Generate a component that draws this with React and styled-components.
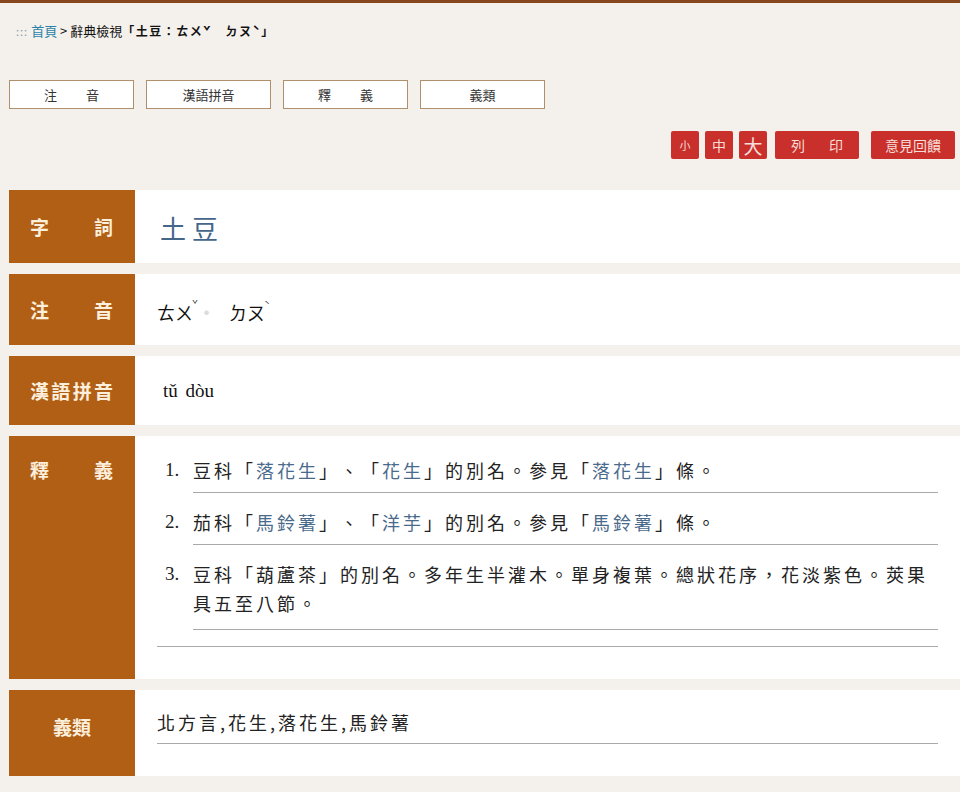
import React from "react";
import styled, { createGlobalStyle } from "styled-components";

const GlobalStyle = createGlobalStyle`
  html, body {
    margin: 0;
    padding: 0;
  }
  body {
    background: #f4f0eb;
    border-top: 3px solid #86461c;
    font-family: "Noto Sans CJK TC", "Noto Sans", sans-serif;
    color: #222;
    overflow: hidden;
    text-spacing-trim: space-all;
  }
`;

const Page = styled.div`
  min-height: 789px;
`;

const Breadcrumb = styled.div`
  padding: 19px 0 0 16px;
  height: 22px;
  font-size: 13px;
  line-height: 18px;
  color: #111;
`;

const Dots = styled.span`
  color: #8a9aa6;
  font-size: 11px;
  letter-spacing: 1px;
  margin-right: 3px;
`;

const Crumb = styled.a`
  color: #2b82a8;
  text-decoration: none;
`;

const Current = styled.span`
  font-weight: 700;
  font-size: 12px;
  letter-spacing: 1.5px;
`;

const Tabs = styled.div`
  display: flex;
  gap: 12px;
  padding: 36px 0 0 9px;
`;

const Tab = styled.button`
  width: 125px;
  height: 29px;
  box-sizing: border-box;
  background: #fff;
  border: 1px solid #b08f6c;
  font-family: "Noto Sans CJK TC", sans-serif;
  font-size: 13px;
  color: #333;
  display: flex;
  align-items: center;
  justify-content: ${(p) => (p.$spread ? "space-between" : "center")};
  padding: ${(p) => (p.$spread ? "0 34px" : "0")};
  cursor: pointer;
`;

const Toolbar = styled.div`
  display: flex;
  justify-content: flex-end;
  align-items: center;
  padding: 22px 5px 0 0;
  height: 28px;
`;

const RedButton = styled.button`
  height: 28px;
  width: ${(p) => p.$w || 28}px;
  margin-left: ${(p) => p.$ml || 6}px;
  box-sizing: border-box;
  background: #c9302b;
  border: none;
  border-radius: 2px;
  color: #f7ddd7;
  font-family: "Noto Sans CJK TC", sans-serif;
  font-size: ${(p) => p.$fs || 14}px;
  line-height: 1;
  padding: ${(p) => (p.$spread ? "0 16px" : "0")};
  display: flex;
  align-items: center;
  justify-content: ${(p) => (p.$spread ? "space-between" : "center")};
  cursor: pointer;
`;

const Rows = styled.div`
  display: flex;
  flex-direction: column;
  gap: 11px;
  padding: 31px 0 0 9px;
`;

const Row = styled.div`
  display: flex;
  min-height: ${(p) => p.$h}px;
`;

const Label = styled.div`
  width: 126px;
  flex: none;
  box-sizing: border-box;
  background: #b25f16;
  color: #fcefdc;
  font-size: 19px;
  font-weight: 700;
  display: flex;
  align-items: ${(p) => (p.$top ? "flex-start" : "center")};
  justify-content: ${(p) => (p.$center ? "center" : "space-between")};
  padding: ${(p) => p.$pad || "0 22px 0 21px"};
  line-height: 24px;
`;

const Cell = styled.div`
  flex: 1;
  background: #fff;
  padding: 0 22px;
  display: flex;
  align-items: center;
  font-size: 18px;
`;

const Block = styled.div`
  flex: 1;
  background: #fff;
  padding: ${(p) => p.$pad};
  font-size: 18px;
`;

const Word = styled.div`
  color: #44668a;
  font-size: 26px;
  letter-spacing: 6px;
  padding-left: 3px;
  padding-top: 2px;
`;

const Zhuyin = styled.div`
  display: flex;
  align-items: center;
  padding-top: 5px;
  font-size: 18px;
  line-height: 24px;
  color: #111;
`;

const Tone = styled.span`
  display: inline-block;
  font-size: 10px;
  line-height: 1;
  vertical-align: 11px;
  margin-left: -1px;
  color: #333;
`;

const Sep = styled.span`
  color: #dcdcdc;
  font-size: 5px;
  margin: 0 20px 0 6px;
`;

const Pinyin = styled.div`
  font-family: "Liberation Serif", serif;
  font-size: 19px;
  padding-left: 6px;
  word-spacing: 3px;
  color: #111;
`;

const Item = styled.div`
  display: flex;
  margin-top: ${(p) => (p.$first ? 0 : 15)}px;
`;

const Num = styled.span`
  width: 36px;
  flex: none;
  padding-left: 8px;
  box-sizing: border-box;
  font-family: "Liberation Serif", serif;
  font-size: 19px;
  line-height: 28px;
  color: #222;
`;

const Text = styled.div`
  flex: 1;
  line-height: ${(p) => p.$lh || 28}px;
  letter-spacing: 3px;
  padding-bottom: ${(p) => p.$pb || 9}px;
  border-bottom: 1px solid #a9a9a9;
  color: #222;
`;

const Link = styled.span`
  color: #4a6a8c;
`;

const Rule = styled.div`
  border-top: 1px solid #a9a9a9;
  margin-top: 16px;
`;

const definitions = [
  [
    "豆科「",
    { link: "落花生" },
    "」、「",
    { link: "花生" },
    "」的別名。參見「",
    { link: "落花生" },
    "」條。",
  ],
  [
    "茄科「",
    { link: "馬鈴薯" },
    "」、「",
    { link: "洋芋" },
    "」的別名。參見「",
    { link: "馬鈴薯" },
    "」條。",
  ],
  ["豆科「葫蘆茶」的別名。多年生半灌木。單身複葉。總狀花序，花淡紫色。莢果具五至八節。"],
];

function Spread({ text }) {
  return text.split("").map((c, i) => <span key={i}>{c}</span>);
}

export default function App() {
  return (
    <Page lang="zh-Hant">
      <GlobalStyle />
      <Breadcrumb>
        <Dots>:::</Dots>
        <Crumb href="#">首頁</Crumb> &gt; 辭典檢視
        <Current>「土豆：ㄊㄨˇ　ㄉㄡˋ」</Current>
      </Breadcrumb>

      <Tabs>
        <Tab $spread>
          <Spread text="注音" />
        </Tab>
        <Tab>漢語拼音</Tab>
        <Tab $spread>
          <Spread text="釋義" />
        </Tab>
        <Tab>義類</Tab>
      </Tabs>

      <Toolbar>
        <RedButton $fs={11} $ml={0}>小</RedButton>
        <RedButton $fs={14}>中</RedButton>
        <RedButton $fs={19}>大</RedButton>
        <RedButton $w={84} $ml={8} $spread>
          <Spread text="列印" />
        </RedButton>
        <RedButton $w={84} $ml={12}>意見回饋</RedButton>
      </Toolbar>

      <Rows>
        <Row $h={73}>
          <Label>
            <Spread text="字詞" />
          </Label>
          <Cell>
            <Word>土豆</Word>
          </Cell>
        </Row>

        <Row $h={71}>
          <Label>
            <Spread text="注音" />
          </Label>
          <Cell>
            <Zhuyin>
              <span>
                ㄊㄨ<Tone>ˇ</Tone>
              </span>
              <Sep>●</Sep>
              <span>
                ㄉㄡ<Tone>ˋ</Tone>
              </span>
            </Zhuyin>
          </Cell>
        </Row>

        <Row $h={69}>
          <Label>
            <Spread text="漢語拼音" />
          </Label>
          <Cell>
            <Pinyin>tǔ dòu</Pinyin>
          </Cell>
        </Row>

        <Row $h={242}>
          <Label $top $pad="22px 22px 0 21px">
            <Spread text="釋義" />
          </Label>
          <Block $pad="20px 22px 32px">
            {definitions.map((parts, i) => (
              <Item key={i} $first={i === 0}>
                <Num>{i + 1}.</Num>
                <Text $pb={i === 2 ? 11 : 8} $lh={i === 2 ? 29 : 28}>
                  {parts.map((p, j) =>
                    typeof p === "string" ? (
                      <React.Fragment key={j}>{p}</React.Fragment>
                    ) : (
                      <Link key={j}>{p.link}</Link>
                    )
                  )}
                </Text>
              </Item>
            ))}
            <Rule />
          </Block>
        </Row>

        <Row $h={86}>
          <Label $center $pad="0 0 12px">義類</Label>
          <Block $pad="18px 22px 32px">
            <Text $pb={7}>北方言,花生,落花生,馬鈴薯</Text>
          </Block>
        </Row>
      </Rows>
    </Page>
  );
}
